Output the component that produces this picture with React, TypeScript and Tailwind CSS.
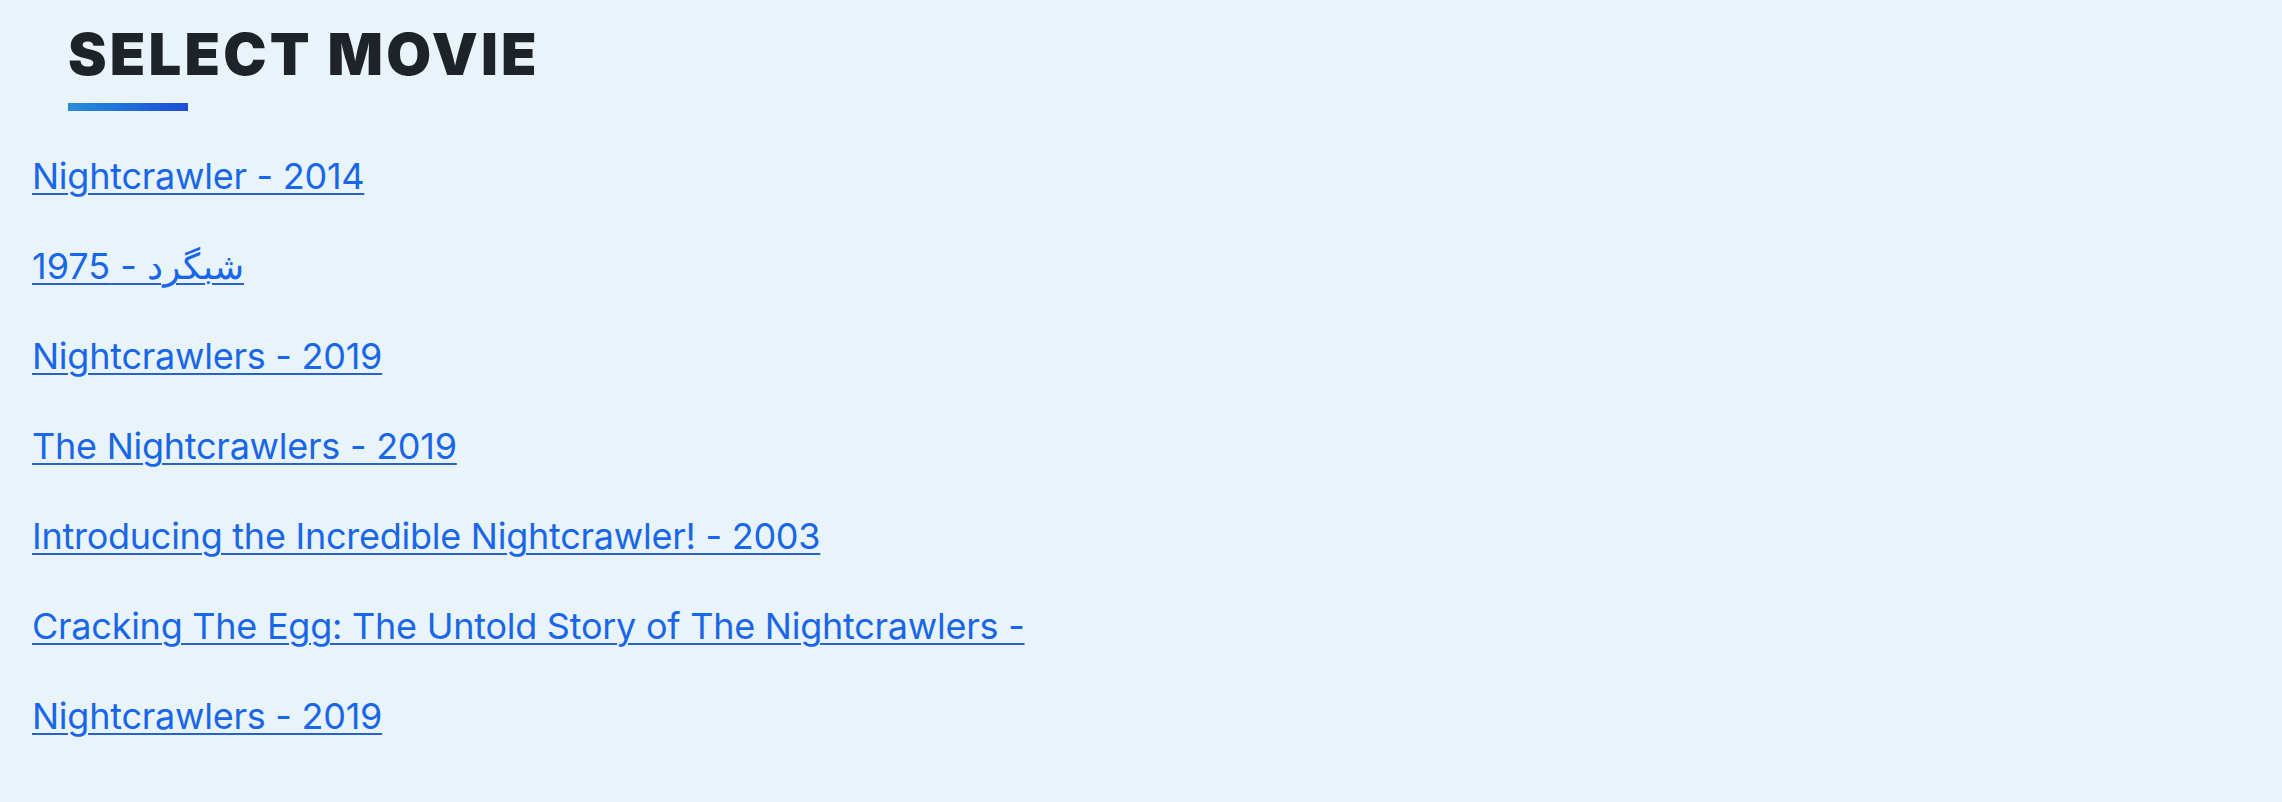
const movies = [
  "Nightcrawler - 2014",
  "شبگرد - 1975",
  "Nightcrawlers - 2019",
  "The Nightcrawlers - 2019",
  "Introducing the Incredible Nightcrawler! - 2003",
  "Cracking The Egg: The Untold Story of The Nightcrawlers -",
  "Nightcrawlers - 2019",
];

const App = () => {
  return (
    <div className="min-h-[802px] w-full bg-[#e8f4f9] font-['Inter','Noto_Sans',sans-serif]">
      {/* Heading */}
      <div className="pl-[68px] pt-[25px]">
        <h2 className="text-[58px] leading-none font-black tracking-[0.055em] text-[#1e2327]">
          SELECT MOVIE
        </h2>
        <div className="mt-[20px] h-[8px] w-[120px] bg-gradient-to-r from-[#2a8dd9] to-[#1f4cd5]" />
      </div>

      {/* Movie list */}
      <ul className="mt-[38px] flex flex-col gap-[36px] pl-[32px]">
        {movies.map((title, i) => (
          <li key={i} className="text-[36px] leading-[54px] tracking-[-0.25px]">
            <a
              href="#"
              dir="auto"
              className="text-[#1a66e8] underline decoration-2 underline-offset-[4px] decoration-[#2763c8]"
            >
              {title}
            </a>
          </li>
        ))}
      </ul>
    </div>
  );
};

export default App;
